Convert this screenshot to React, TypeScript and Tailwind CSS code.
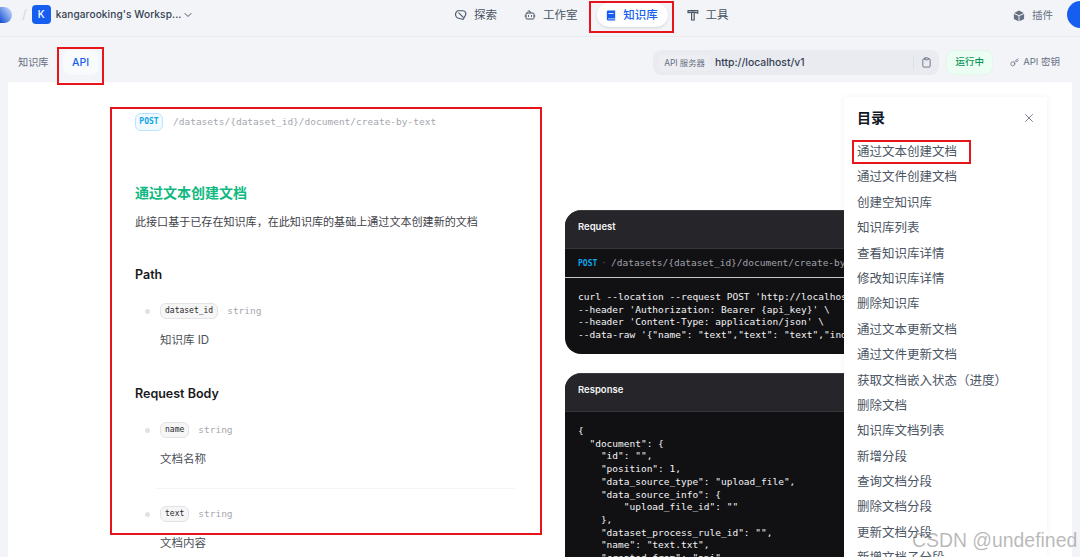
import React from 'react'
import { Bot, ChevronDown, Clipboard, Key, X } from 'lucide-react'

const sans = "font-['Inter','Noto_Sans_CJK_SC',sans-serif]"
const mono = "font-['DejaVu_Sans_Mono',monospace]"

const tocItems = [
  '通过文本创建文档',
  '通过文件创建文档',
  '创建空知识库',
  '知识库列表',
  '查看知识库详情',
  '修改知识库详情',
  '删除知识库',
  '通过文本更新文档',
  '通过文件更新文档',
  '获取文档嵌入状态（进度）',
  '删除文档',
  '知识库文档列表',
  '新增分段',
  '查询文档分段',
  '删除文档分段',
  '更新文档分段',
  '新增文档子分段',
]

const requestLines = [
  "curl --location --request POST 'http://localhost/v1/datasets/{dataset_id}/document/create-by-text' \\",
  "--header 'Authorization: Bearer {api_key}' \\",
  "--header 'Content-Type: application/json' \\",
  `--data-raw '{"name": "text","text": "text","indexing_technique": "high_quality"}'`,
]

const responseLines = `{
  "document": {
    "id": "",
    "position": 1,
    "data_source_type": "upload_file",
    "data_source_info": {
        "upload_file_id": ""
    },
    "dataset_process_rule_id": "",
    "name": "text.txt",
    "created_from": "api",`

const Field = ({ name, desc }: { name: string; desc: string }) => (
  <div>
    <div className="flex items-center h-4 pl-[10px]">
      <span className="w-[5px] h-[5px] rounded-full bg-[#dfe1e5] mr-[10px]" />
      <span className={`${mono} text-[8px] leading-[14px] h-4 px-[4px] border border-[#e2e3e6] bg-[#f6f6f7] rounded-md text-[#26272b]`}>
        {name}
      </span>
      <span className={`${mono} text-[9.5px] text-[#a4a7ae] ml-[9px]`}>string</span>
    </div>
    <p className="text-[11.5px] leading-4 text-[#4b4f58] mt-[13px] ml-[25px]">{desc}</p>
  </div>
)

const NavItem = ({ icon, label }: { icon: React.ReactNode; label: string }) => (
  <div className="flex items-center gap-[7px] text-[11.5px] text-[#495464]">
    {icon}
    <span className="mt-[1px]">{label}</span>
  </div>
)

const App: React.FC = () => {
  return (
    <div className={`${sans} relative h-[557px] w-[1080px] overflow-hidden bg-[#f2f4f7] flex flex-col`}>
      {/* Header */}
      <header className="h-[37px] shrink-0 border-b border-[#e8eaee] flex items-center relative pb-[7px]">
        <div className="w-[12px] h-[16px] rounded-r-full bg-linear-to-bl from-[#dbe6fb] to-[#1446d0]" />
        <span className="ml-[10px] text-[13px] text-[#d5d8de]">/</span>
        <div className="ml-[5px] w-[19px] h-[19px] rounded-[4px] bg-[#155eef] text-white text-[10px] font-medium flex items-center justify-center">
          K
        </div>
        <span className="ml-[5px] text-[10.1px] tracking-[0.1px] font-medium text-[#354052] whitespace-nowrap">kangarooking's Worksp...</span>
        <ChevronDown className="ml-[1px] w-3 h-3 text-[#495464]" />

        <nav className="absolute left-[455px] top-[3px] h-[24px] flex items-center">
          <NavItem
            label="探索"
            icon={
              <svg viewBox="0 0 14 14" className="w-3 h-3" fill="none" stroke="#495464" strokeWidth="1.3">
                <path d="M3 2h6a3.5 3.5 0 0 1 3 5.5L9.5 12.2 3.2 10.5A4.5 4.5 0 0 1 1.8 3.4z" />
                <path d="M4 4.2 10 10" />
              </svg>
            }
          />
          <div className="ml-[27px]">
            <NavItem label="工作室" icon={<Bot className="w-3 h-3" />} />
          </div>
          <div className="ml-[19px] h-[24px] w-[71px] rounded-xl bg-white shadow-sm flex items-center justify-center gap-[7px] text-[11.5px] font-medium text-[#155eef]">
            <svg viewBox="0 0 12 12" className="w-[10px] h-[11px]" fill="#155eef">
              <path d="M1 1.5A1.5 1.5 0 0 1 2.5 0H11v12H2.5A1.5 1.5 0 0 1 1 10.5z" />
              <path d="M3 3h6v1H3z" fill="#fff" />
              <path d="M2.5 9.6H11v.9H2.5z" fill="#fff" />
            </svg>
            <span className="mt-[1px]">知识库</span>
          </div>
          <div className="ml-[19px]">
            <NavItem
              label="工具"
              icon={
                <svg viewBox="0 0 12 12" className="w-3 h-3" fill="none" stroke="#495464" strokeWidth="1.2">
                  <path d="M1 1.6h9.8v2.6c-1-.6-2-.9-3.3-.9H4.2L1 3.6z" strokeLinejoin="round" />
                  <path d="M4.6 3.4h2.6v7.6H4.6z" strokeLinejoin="round" />
                </svg>
              }
            />
          </div>
        </nav>

        <div className="absolute left-[1013px] top-[8px] flex items-center gap-[7px] text-[10.5px] text-[#676f83]">
          <svg viewBox="0 0 12 12" className="w-3 h-3" fill="#676f83">
            <path d="M6 .6 10.8 3 6 5.3 1.2 3z" />
            <path d="M.9 3.9 5.5 6.1v5.2L.9 9z" />
            <path d="M11.1 3.9 6.5 6.1v5.2L11.1 9z" />
          </svg>
          <span>插件</span>
        </div>
        <div className="absolute left-[1067px] top-[1px] w-[27px] h-[27px] rounded-full bg-[#155eef]" />
      </header>

      {/* Sub bar */}
      <div className="h-[45px] shrink-0 flex items-center relative pt-[6px]">
        <span className="ml-[18px] text-[10.2px] text-[#676f83]">知识库</span>
        <div className="ml-[14px] w-[36px] h-[25px] rounded-lg bg-[#f9fafb] flex items-center justify-center text-[10.5px] font-medium text-[#155eef]">
          API
        </div>
        <div className="ml-auto flex items-center">
          <div className="w-[286px] h-[25px] rounded-lg bg-[#e9ebf0] flex items-center px-[6px]">
            <span className="h-[16px] px-[5px] rounded bg-[#eceef2] text-[8.4px] leading-4 text-[#676f83]">API 服务器</span>
            <span className="ml-[5px] text-[10.4px] font-medium text-[#354052]">http://localhost/v1</span>
            <span className="ml-auto w-px h-3 bg-[#dcdfe4] mr-[7px]" />
            <Clipboard className="w-[11px] h-[11px] text-[#676f83] mr-[1px]" />
          </div>
          <div className="ml-[7px] w-[47px] h-[25px] rounded-lg bg-[#ecfdf3] border border-[#e3f7ea] flex items-center justify-center text-[9.5px] font-medium text-[#079455]">
            运行中
          </div>
          <div className="ml-[17px] mr-[20px] flex items-center gap-[4px] text-[9.5px] text-[#676f83]">
            <Key className="w-[9px] h-[9px]" />
            <span>API 密钥</span>
          </div>
        </div>
      </div>

      {/* Doc panel */}
      <main className="flex-1 min-h-0 mx-2 bg-white flex relative overflow-hidden">
        <section className="w-[380px] ml-[127px] pt-[31px] shrink-0">
          <div className="flex items-center h-[18px]">
            <span className={`${mono} h-[18px] w-[28px] rounded-md border border-[#bae6fd] bg-[#f0f9ff] text-[8px] font-bold leading-4 text-center text-[#0ea5e9]`}>
              POST
            </span>
            <span className={`${mono} ml-[10px] text-[9.5px] text-[#a4a7ae] whitespace-nowrap`}>
              /datasets/{'{dataset_id}'}/document/create-by-text
            </span>
          </div>
          <h2 className="mt-[52px] text-[14px] leading-5 font-semibold text-[#10b981]">通过文本创建文档</h2>
          <p className="mt-[11px] text-[11.07px] leading-4 text-[#3f4249] whitespace-nowrap">
            此接口基于已存在知识库，在此知识库的基础上通过文本创建新的文档
          </p>
          <h3 className="mt-[37px] text-[12.5px] leading-4 font-semibold text-[#18181b]">Path</h3>
          <div className="mt-[20px]">
            <Field name="dataset_id" desc="知识库 ID" />
          </div>
          <h3 className="mt-[38px] text-[12.5px] leading-4 font-semibold text-[#18181b]">Request Body</h3>
          <div className="mt-[20px]">
            <Field name="name" desc="文档名称" />
          </div>
          <div className="mt-[21px] ml-[20px] w-[360px] h-px bg-[#f5f5f6]" />
          <div className="mt-[17px]">
            <Field name="text" desc="文档内容" />
          </div>
        </section>

        <section className="ml-[50px] pt-[128px] w-[330px] shrink-0">
          <div className="rounded-2xl overflow-hidden bg-[#111114] border-t border-[#3a3a3f]">
            <div className="h-[38px] bg-[#25252a] border-b border-[#35353a] px-[13px] pt-[10px] text-[9.5px] leading-3 font-semibold text-[#f4f4f5]">
              Request
            </div>
            <div className={`${mono} h-[29px] border-b border-[#c8c8cc] px-[13px] pt-[1px] flex items-center text-[9.5px] whitespace-nowrap`}>
              <span className="text-[8px] font-bold text-[#0ea5e9]">POST</span>
              <span className="mx-[4px] text-[#52525b]">·</span>
              <span className="text-[#a1a1aa]">/datasets/{'{dataset_id}'}/document/create-by-text</span>
            </div>
            <pre className={`${mono} h-[76px] px-[13px] pt-[13px] text-[9.5px] leading-[12.7px] text-[#f4f4f5] overflow-hidden`}>
              {requestLines.join('\n')}
            </pre>
          </div>
          <div className="mt-[19px] rounded-t-2xl overflow-hidden bg-[#111114] border-t border-[#3a3a3f]">
            <div className="h-[38px] bg-[#25252a] border-b border-[#35353a] px-[13px] pt-[10px] text-[9.5px] leading-3 font-semibold text-[#f4f4f5]">
              Response
            </div>
            <pre className={`${mono} px-[13px] pt-[13px] text-[9.5px] leading-[12.7px] text-[#f4f4f5] h-[200px] overflow-hidden`}>
              {responseLines}
            </pre>
          </div>
        </section>

        {/* TOC floats over the code cards */}
        <aside className="absolute left-[836px] top-[15px] bottom-0 w-[203px] bg-white shadow-[0_0_6px_rgba(16,24,40,0.06)] pl-[13px] pr-[11px] pt-[10px]">
          <div className="flex items-center justify-between h-5">
            <span className="text-[14px] font-semibold text-[#101828]">目录</span>
            <X className="w-[14px] h-[14px] mt-[2px] text-[#676f83]" strokeWidth={1.5} />
          </div>
          <ul className="mt-[17px] flex flex-col gap-[9.4px]">
            {tocItems.map(item => (
              <li key={item} className="text-[12.5px] leading-4 text-[#4b5563] whitespace-nowrap">
                {item}
              </li>
            ))}
          </ul>
        </aside>
      </main>

      {/* Red annotation boxes */}
      <div className="absolute left-[57px] top-[47px] w-[47px] h-[38px] border-2 border-[#e8141c]" />
      <div className="absolute left-[589px] top-[1px] w-[85px] h-[32px] border-2 border-[#e8141c]" />
      <div className="absolute left-[110px] top-[107px] w-[432px] h-[428px] border-2 border-[#e8141c]" />
      <div className="absolute left-[852px] top-[140px] w-[119px] h-[24px] border-2 border-[#e8141c]" />

      {/* Watermark */}
      <div className="absolute left-[912px] top-[528px] font-['Liberation_Sans',sans-serif] text-[19.4px] leading-6 text-[#8a8a8a]/60 whitespace-nowrap">
        CSDN @undefined
      </div>
    </div>
  )
}

export default App
